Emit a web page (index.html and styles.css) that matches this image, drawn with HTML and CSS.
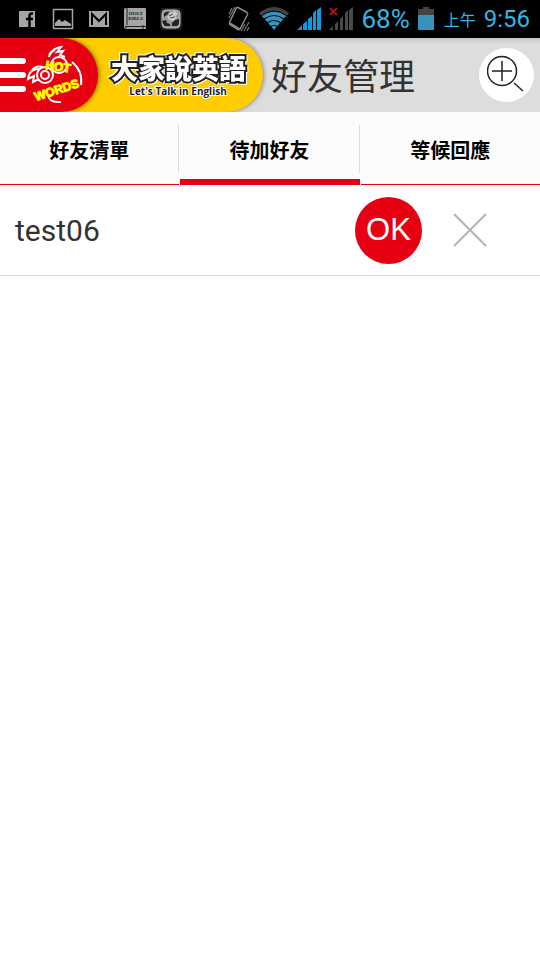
FILE: index.html
```
<!DOCTYPE html>
<html lang="zh-Hant">
<head>
<meta charset="UTF-8">
<meta name="viewport" content="width=device-width, initial-scale=1.0">
<title>好友管理</title>
<link rel="stylesheet" href="styles.css">
</head>
<body>
  <div class="status">
    <div class="notices">
      <svg width="24" height="24" viewBox="0 0 24 24">
        <path fill="#a5a5a5" d="M4 4h16v16H4z"/>
        <path fill="none" stroke="#000" stroke-width="2.500" d="M18 6.500h-1q-2.500 0-2.500 2.500v11M11 12h7"/>
      </svg>
      <svg width="24" height="24" viewBox="0 0 24 24">
        <path fill="none" stroke="#a5a5a5" stroke-width="1.500" d="M2.500 2.500h19v19h-19z"/>
        <path fill="#a5a5a5" d="M4 19v-3l4-4 3 3 3-2 6 4v2z"/>
      </svg>
      <svg width="24" height="24" viewBox="0 0 24 24">
        <path fill="#a5a5a5" d="M2 4h20v16H2z"/>
        <path fill="none" stroke="#000" stroke-width="2" d="M5 18V7l7 7 7-7v11"/>
      </svg>
      <svg width="24" height="24" viewBox="0 0 24 24">
        <path fill="#a5a5a5" d="M3 1h19q1 0 1 1v20H3q-2 0-2-2V3q0-2 2-2z"/>
        <path fill="none" stroke="#222" d="M4 1v17M2 19.500h21M3 19v3M20 18v4"/>
        <text class="book" x="13" y="8">HOLY</text>
        <text class="book" x="13" y="13">BIBLE</text>
      </svg>
      <svg width="24" height="24" viewBox="0 0 24 24">
        <rect x="1" y="1" width="22" height="22" rx="4" fill="#222"/>
        <rect x="3" y="3" width="18" height="18" rx="4" fill="#999" stroke="#bbb"/>
        <path fill="#222" d="M5 6l5-2-1 3-4 3zM3 14l4-1 1 3 3 1v2H6q-2-1-3-5zM16 13l4-1v5l-2 2h-5v-3z"/>
        <path fill="#ccc" d="M11 6l5-2 3 3-3 2 2 2-4 3-4-1-2-3z"/>
        <path stroke="#444" d="M10 9l4-2M11 11l5-1"/>
      </svg>
    </div>
    <div class="system">
      <svg width="24" height="26" viewBox="0 0 24 26">
        <path fill="none" stroke="#888" stroke-width="1.500" d="M11 1.500l9 5q1 .7.500 2L13 23q-.7 1-2 .5l-8-5q-1-.6-.5-2L9 2.500q.7-1.500 2-1z"/>
        <path stroke="#888" stroke-width="2.500" d="M3 17.500l9 5.500"/>
        <path stroke="#777" stroke-width="1.200" d="M2 8l3-6M2 12l6-11M17 25l5-9M14 25l4-7M20 25l2-4"/>
      </svg>
      <svg width="30" height="24" viewBox="0 0 30 24">
        <path fill="#444" d="M0 6q15-12 30 0l-3 4Q15 1 3 10z"/>
        <path fill="#3594bd" d="M3 9q12-9 24 0L15 23z"/>
        <path fill="none" stroke="#000" stroke-width="1.200" d="M5 12q10-7 20 0M8 16q7-5 14 0M11 20q4-3 8 0"/>
        <path fill="none" stroke="#000" d="M2 9q13-10 26 0"/>
      </svg>
      <svg width="24" height="24" viewBox="0 0 24 24">
        <path fill="#0a9be6" d="M0 23l5-5v5zM6 23v-6l4-3v9zM11 23V12l4-3v14zM16 23V6l3-3v20zM20 23V3l4-3v23z"/>
      </svg>
      <svg width="24" height="24" viewBox="0 0 24 24">
        <path fill="#4a4a4a" d="M0 23l4-4v4zM6 23v-6l3-3v9zM11 23V12l3-3v14zM16 23V6l3-3v20zM20 23V3l4-3v23z"/>
        <path stroke="#b01212" stroke-width="2" d="M1 1l7 7M8 1L1 8"/>
      </svg>
      <span class="percent">68%</span>
      <svg width="16" height="24" viewBox="0 0 16 24">
        <path fill="#444" d="M5 0h6v2h5v6H0V2h5z"/>
        <path fill="#3594bd" d="M0 8h16v15H0z"/>
      </svg>
      <span class="ampm">上午</span>
      <span class="clock">9:56</span>
    </div>
  </div>

  <header class="header">
    <div class="brand">
      <button class="menu" type="button" aria-label="選單">
        <svg width="26" height="36" viewBox="0 0 26 36">
          <path stroke="#fff" stroke-width="6" stroke-linecap="round" d="M-4 4h27M-4 18h27M-4 32h27"/>
        </svg>
        <svg width="60" height="64" viewBox="0 0 60 64">
          <g fill="none" stroke="#fff" stroke-width="2">
            <circle cx="19" cy="32" r="8"/>
            <circle cx="19" cy="32" r="4"/>
            <circle cx="33" cy="22" r="8"/>
            <path d="M13 26q-10 0-11 10l6-3-1 6 6-3M6 27q4-5 11-3M23 12q4-7 12-8l-4 5 6-1-3 4 5 2M23 14q1-5 6-7"/>
            <path d="M46 19q11 9 9 23M22 52q1 8 13 7"/>
          </g>
          <text class="hot" x="19" y="26" transform="rotate(8 19 26)">HOT</text>
          <text class="words" x="10" y="58" transform="rotate(-18 10 58)">WORDS</text>
        </svg>
      </button>
      <svg class="title-logo" width="144" height="60" viewBox="0 0 144 60">
        <g class="halo">
          <text class="logo-text" x="5" y="34">大家說英語</text>
        </g>
        <text class="logo-sub" x="72" y="50">Let's Talk in English</text>
      </svg>
    </div>
    <h1 class="heading">好友管理</h1>
    <button class="search" type="button" aria-label="搜尋好友">
      <svg width="40" height="40" viewBox="0 0 40 40">
        <g fill="none" stroke="#222" stroke-width="1.500">
          <circle cx="15" cy="16" r="14.500"/>
          <path d="M15 6v20M5 16h20M27 28l9 8"/>
        </g>
      </svg>
    </button>
  </header>

  <nav class="tabs">
    <a class="tab" href="#list"><span>好友清單</span></a>
    <a class="tab active" href="#pending"><span>待加好友</span></a>
    <a class="tab" href="#waiting"><span>等候回應</span></a>
  </nav>

  <ul class="friends">
    <li class="friend">
      <span class="name">test06</span>
      <button class="ok" type="button">OK</button>
      <button class="remove" type="button" aria-label="刪除">
        <svg width="34" height="34" viewBox="0 0 34 34">
          <path stroke="#b4b4b4" stroke-width="2" d="M1 1l32 32M33 1L1 33"/>
        </svg>
      </button>
    </li>
  </ul>
</body>
</html>
```
FILE: styles.css
```
* {
  box-sizing: border-box;
}

body {
  margin: 0;
  background: #fff;
  color: #333;
  font-family: Roboto, "Noto Sans CJK TC", sans-serif;
}

button {
  padding: 0;
  border: 0;
  background: none;
  cursor: pointer;
}

svg {
  display: block;
  flex: none;
}

/* status bar */
.status {
  display: flex;
  justify-content: space-between;
  align-items: center;
  height: 38px;
  padding: 0 10px 0 15px;
  background: #000;
  color: #33b5e5;
}

.notices {
  display: flex;
  gap: 12px;
}

.system {
  display: flex;
  align-items: center;
  gap: 8px;
  line-height: 38px;
}

.percent {
  font-size: 26px;
}

.ampm {
  padding-top: 4px;
  padding-left: 2px;
  font-size: 16px;
}

.clock {
  font-size: 24px;
}

.book {
  font: bold 5px "Liberation Serif", serif;
  text-anchor: middle;
  fill: #222;
}

/* header */
.header {
  display: flex;
  align-items: center;
  height: 74px;
  padding-right: 6px;
  background: linear-gradient(#c8c8c8, #ddd 6px);
}

.brand {
  display: flex;
  align-items: center;
  height: 74px;
  padding-right: 13px;
  border-radius: 0 37px 37px 0;
  background: #fc0;
  box-shadow: 1px 0 4px rgba(0, 0, 0, 0.4);
  clip-path: inset(0 -8px 0 0);
}

.menu {
  display: flex;
  align-items: center;
  height: 74px;
  padding-right: 12px;
  border-radius: 0 37px 37px 0;
  background: #e60012;
  box-shadow: 1px 0 4px rgba(0, 0, 0, 0.5);
  clip-path: inset(0 -8px 0 0);
}

.title-logo {
  margin-left: 8px;
}

.hot,
.words {
  font-family: "Liberation Sans", sans-serif;
  font-size: 12px;
  font-weight: bold;
  fill: #ff0;
  stroke: #ff0;
  stroke-width: 1px;
}

.halo {
  filter: drop-shadow(1px 1px 0 #fff) drop-shadow(-1px -1px 0 #fff);
}

.logo-text {
  font-family: "Noto Sans CJK TC", sans-serif;
  font-size: 27px;
  font-weight: 900;
  fill: #fff;
  stroke: #222;
  stroke-width: 4px;
  paint-order: stroke;
}

.logo-sub {
  font: bold 10px "Open Sans", sans-serif;
  text-anchor: middle;
  fill: #222;
  stroke: #fff;
  stroke-width: 2px;
  paint-order: stroke;
}

.heading {
  flex: 1;
  margin: 0 0 0 8px;
  padding-top: 6px;
  font-size: 36px;
  font-weight: 400;
  line-height: 68px;
}

.search {
  display: flex;
  justify-content: center;
  align-items: center;
  width: 55px;
  height: 54px;
  border-radius: 50%;
  background: #fff;
}

/* tabs */
.tabs {
  display: grid;
  grid-template-columns: repeat(3, 1fr);
  column-gap: 1px;
  height: 73px;
}

.tab {
  padding-top: 13px;
  border-bottom: 1px solid #e60012;
  background: #fcfcfc;
  color: #000;
  font-size: 20px;
  font-weight: 700;
  text-align: center;
  text-decoration: none;
}

.tab span {
  display: block;
  height: 48px;
  line-height: 52px;
}

.tab:not(:last-child) span {
  border-right: 1px solid #ddd;
}

.active {
  border-bottom-width: 6px;
}

/* friend list */
.friends {
  margin: 0;
  padding: 0;
  list-style: none;
}

.friend {
  display: flex;
  align-items: center;
  height: 91px;
  padding-right: 53px;
  padding-left: 15px;
  border-bottom: 1px solid #ddd;
}

.name {
  flex: 1;
  font-size: 30px;
}

.ok {
  width: 67px;
  height: 67px;
  margin-right: 31px;
  border-radius: 50%;
  background: #e60012;
  color: #fff;
  font-family: "Liberation Sans", sans-serif;
  font-size: 31px;
}
```
